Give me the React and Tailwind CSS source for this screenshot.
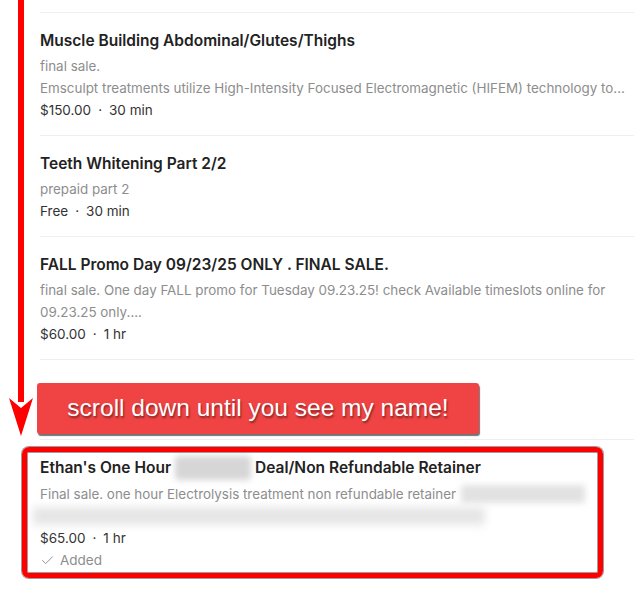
import React from 'react';
import { Check } from 'lucide-react';

const services = [
  {
    title: 'Muscle Building Abdominal/Glutes/Thighs',
    desc: ['final sale.', 'Emsculpt treatments utilize High-Intensity Focused Electromagnetic (HIFEM) technology to...'],
    price: '$150.00',
    duration: '30 min',
  },
  {
    title: 'Teeth Whitening Part 2/2',
    desc: ['prepaid part 2'],
    price: 'Free',
    duration: '30 min',
  },
  {
    title: 'FALL Promo Day 09/23/25 ONLY . FINAL SALE.',
    desc: ['final sale. One day FALL promo for Tuesday 09.23.25! check Available timeslots online for 09.23.25 only....'],
    price: '$60.00',
    duration: '1 hr',
  },
];

const Meta = ({ price, duration }) => (
  <div className="text-[13.5px] leading-[22px] text-[#333]">
    {price}
    <span className="mx-[7px]">·</span>
    {duration}
  </div>
);

const ServiceRow = ({ item }) => (
  <div className="border-t border-[#efefef] pt-[17px] pb-[14px] pr-[6px]">
    <div className="text-[15.5px] leading-[22px] font-semibold text-[#222]">{item.title}</div>
    <div className="mt-[3px] text-[13.4px] leading-[22px] text-[#8d8d8d]">
      {item.desc.map((d, i) => (
        <div key={i} className={d.endsWith('to...') ? 'whitespace-nowrap' : ''}>
          {d}
        </div>
      ))}
    </div>
    <Meta price={item.price} duration={item.duration} />
  </div>
);

export default function App() {
  return (
    <div
      className="relative w-[634px] h-[596px] overflow-hidden bg-white"
      style={{ fontFamily: 'Inter, "Liberation Sans", Arial, sans-serif' }}
    >
      <div className="pl-[40px] pt-[12px]">
        {services.map((s) => (
          <ServiceRow key={s.title} item={s} />
        ))}

        {/* hidden row under the callout */}
        <div className="border-t border-[#efefef] h-[80px]" />

        {/* my row */}
        <div className="border-t border-[#efefef] pt-[16px] pb-[14px] pr-[6px]">
          <div className="flex items-center text-[15.5px] leading-[22px] font-semibold text-[#222]">
            <span>Ethan's One Hour</span>
            <span className="mx-[4px] h-[24px] w-[76px] rounded-sm bg-[#d6d6d6] blur-[3px]" />
            <span>Deal/Non Refundable Retainer</span>
          </div>
          <div className="mt-[3px] flex items-center text-[13.4px] leading-[22px] text-[#8d8d8d]">
            <span>Final sale. one hour Electrolysis treatment non refundable retainer</span>
            <span className="ml-[5px] h-[18px] w-[124px] bg-[#e2e2e2] blur-[3px]" />
          </div>
          <div className="h-[22px] flex items-center -ml-[7px]">
            <span className="h-[18px] w-[452px] bg-[#e6e6e6] blur-[4px]" />
          </div>
          <Meta price="$65.00" duration="1 hr" />
          <div className="flex items-center gap-[5px] text-[13.5px] leading-[22px] text-[#8d8d8d]">
            <Check size={15} strokeWidth={1.5} />
            Added
          </div>
        </div>
      </div>

      {/* annotation: arrow */}
      <div className="absolute left-[18px] top-0 h-[402px] w-[6px] bg-[#ff0000]" />
      <svg className="absolute left-[9px] top-[398px]" width="24" height="38" viewBox="0 0 24 38">
        <polygon points="0,0 12,10 24,0 12,38" fill="#ff0000" />
      </svg>

      {/* annotation: callout */}
      <div
        className="absolute left-[37px] top-[383px] flex h-[51px] w-[442px] items-center justify-center rounded-[3px] bg-[#f04343] text-[24.5px] text-white shadow-[1px_2px_1px_rgba(0,0,0,0.55)]"
        style={{ fontFamily: '"Liberation Sans", Arial, sans-serif', textShadow: '1px 2px 2px rgba(0,0,0,0.45)' }}
      >
        scroll down until you see my name!
      </div>

      {/* annotation: highlight box */}
      <div className="absolute left-[22px] top-[447px] h-[131px] w-[581px] rounded-[7px] border-[5px] border-[#ff0000] shadow-[0_0_0_1px_rgba(60,60,60,0.5),inset_0_0_0_1px_rgba(60,60,60,0.5)]" />
    </div>
  );
}
